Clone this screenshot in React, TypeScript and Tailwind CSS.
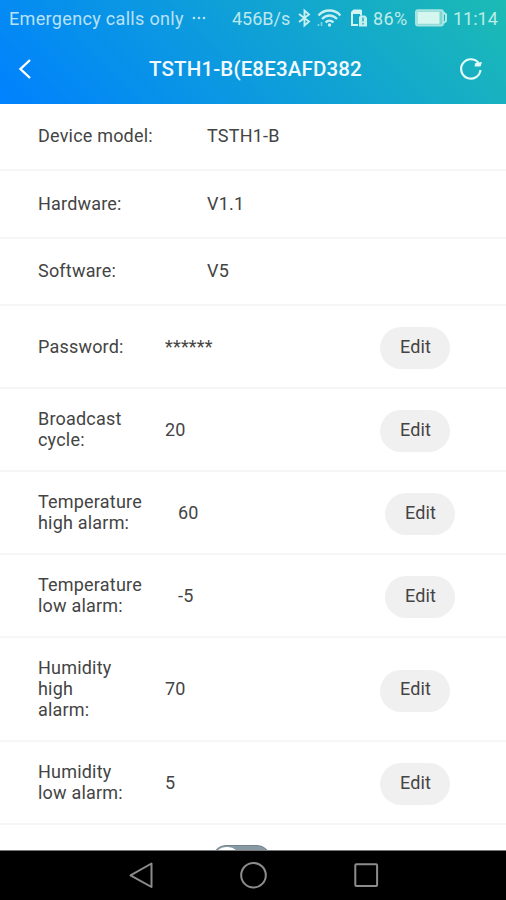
import type { ReactNode } from "react";

type InfoRowProps = {
  label: string;
  value: string;
  className: string;
};

type EditRowProps = {
  lines: string[];
  value: string;
  wide?: boolean;
  tall?: boolean;
};

const infoRows: InfoRowProps[] = [
  { label: "Device model:", value: "TSTH1-B", className: "h-[67px]" },
  { label: "Hardware:", value: "V1.1", className: "h-[68px]" },
  { label: "Software:", value: "V5", className: "h-[67px]" },
];

const editRows: EditRowProps[] = [
  { lines: ["Password:"], value: "******" },
  { lines: ["Broadcast", "cycle:"], value: "20" },
  { lines: ["Temperature", "high alarm:"], value: "60", wide: true },
  { lines: ["Temperature", "low alarm:"], value: "-5", wide: true },
  { lines: ["Humidity", "high", "alarm:"], value: "70", tall: true },
  { lines: ["Humidity", "low alarm:"], value: "5" },
];

function InfoRow({ label, value, className }: InfoRowProps) {
  return (
    <div className={`flex shrink-0 items-center border-b-2 border-[#f6f6f6] pb-0.5 pl-[38px] ${className}`}>
      <span className="w-[169px]">{label}</span>
      <span>{value}</span>
    </div>
  );
}

function EditRow({ lines, value, wide, tall }: EditRowProps) {
  return (
    <div
      className={`flex shrink-0 items-center border-b-2 border-[#f6f6f6] pl-[38px] ${tall ? "h-[104px]" : "h-[83px]"}`}
    >
      <div className={`${lines.length > 1 ? "pb-0.5" : ""} ${wide ? "w-[140px]" : "w-[127px]"}`}>
        {lines.map((line) => (
          <div key={line}>{line}</div>
        ))}
      </div>
      <span className={`${tall ? "pb-0.5" : ""} ${wide ? "w-[207px]" : "w-[215px]"}`}>{value}</span>
      <button
        className={`mt-[3px] h-[42px] w-[70px] rounded-full bg-[#f0f0f0] pl-px tracking-[0.1px] ${tall ? "pb-[5px]" : "pb-[3px]"}`}
      >
        Edit
      </button>
    </div>
  );
}

function StatusBar() {
  return (
    <div className="flex h-9 items-center pl-[9px] text-[18px] text-[#b9e2f8]">
      <span className="w-[183px] tracking-[0.33px]">Emergency calls only</span>
      <svg className="h-2 w-[14px]" viewBox="0 0 14 8" fill="currentColor">
        <circle cx="2" cy="4" r="1.3" />
        <circle cx="7" cy="4" r="1.3" />
        <circle cx="12" cy="4" r="1.3" />
      </svg>
      <span className="ml-[26px] w-[65px] text-[#b9e8ee]">456B/s</span>
      <svg className="h-5 w-3.5" viewBox="0 0 14 20" fill="none" stroke="#c6f0f2" strokeWidth="1.9">
        <path d="M2 6l10 7.500-4.500 4V2.500L12 6.500 2 14" />
      </svg>
      <svg className="ml-1.5 h-5 w-6" viewBox="0 0 24 20" fill="none" stroke="#c6f0f2" strokeWidth="2.300">
        <path d="M1.500 7.500C7 .8 18 .8 23.400 7.500M5 11c4.500-4.700 10.500-4.700 15 0M8.500 14.500c2.500-2.500 5.500-2.500 8 0" />
        <circle cx="12.500" cy="17" r="1.700" fill="#c6f0f2" stroke="none" />
        <path d="M4.500 14v4M1.500 16v2" strokeWidth="1.600" opacity=".6" />
      </svg>
      <svg className="ml-[9px] h-5 w-[18px]" viewBox="0 0 18 20" fill="none">
        <path d="M3.500 1.500H11l1 1v5h-2V6H3v10h5v2H1V4z" fill="#d2f4f2" />
        <path d="M10.500 7.500H15l2 2v9H9V9z" fill="#c6f0ee" />
        <path d="M13 9.500v4M13 15v1.500" stroke="#2aafc0" strokeWidth="1.500" />
      </svg>
      <span className="ml-[5px] w-[42px] tracking-[0.4px] text-[#bdece6]">86%</span>
      <svg className="h-[18px] w-[33px]" viewBox="0 0 33 18" fill="none">
        <rect x="1" y="1.200" width="27" height="15.300" rx="2" fill="#7ed6d2" stroke="#a5e4e0" strokeWidth="2" />
        <rect x="2.500" y="2.800" width="22" height="12" fill="#d6f6f0" />
        <path d="M28.500 3.500l2.500 2v6.500l-2.500 2" stroke="#b5eae4" strokeWidth="2" />
      </svg>
      <span className="ml-[5px] text-[#bdece6]">11:14</span>
    </div>
  );
}

function Header({ children }: { children: ReactNode }) {
  return (
    <header className="h-[104px] shrink-0 bg-[linear-gradient(45deg,#0081ff,#1cbbb4)]">
      <StatusBar />
      <div className="flex h-[66px] items-center text-white">
        <svg className="ml-[18px] h-5 w-[14px]" viewBox="0 0 14 20" fill="none" stroke="currentColor" strokeWidth="2.400">
          <path d="M12 1 2.500 10 12 19" />
        </svg>
        <h1 className="ml-[117px] w-[310px] text-[20.500px] font-medium tracking-[0.150px] text-[#f2faff]">
          {children}
        </h1>
        <svg className="h-6 w-6" viewBox="0 0 24 24" fill="none" stroke="#e4faf8" strokeWidth="2.200">
          <path d="M21.500 13A9.700 9.700 0 1 1 19.500 6" />
          <path d="m15.500 9.500.8-3.500L23 5l-1.500 4.500z" fill="#e4faf8" stroke="none" />
        </svg>
      </div>
    </header>
  );
}

function NavBar() {
  return (
    <nav className="flex h-[50px] shrink-0 items-center border-t border-[#777] bg-black pb-0.5 pl-[129px]">
      <svg className="h-7 w-[252px]" viewBox="0 0 252 28" fill="none" stroke="#8c8c8c" strokeWidth="2">
        <path d="M22.500 2.500v23.500L1.500 14.300z" strokeLinejoin="round" />
        <circle cx="124.500" cy="14.200" r="12.300" />
        <rect x="226.300" y="3.200" width="21.800" height="21.800" rx="1" />
      </svg>
    </nav>
  );
}

export default function App() {
  return (
    <div className="flex h-[900px] w-[506px] flex-col overflow-hidden bg-white font-[Roboto,sans-serif] text-[18px] leading-[21px] text-[#444]">
      <Header>TSTH1-B(E8E3AFD382</Header>
      <main className="flex min-h-0 flex-1 flex-col overflow-hidden tracking-[0.2px]">
        {infoRows.map((row) => (
          <InfoRow key={row.label} {...row} />
        ))}
        {editRows.map((row) => (
          <EditRow key={row.lines.join(" ")} {...row} />
        ))}
        <div className="mt-5 ml-[212px] h-[34px] w-[59px] shrink-0 rounded-[14px] border border-[#75868e] bg-[#8799a3] p-px">
          <div className="h-[30px] w-[26px] rounded-[12px] bg-white" />
        </div>
      </main>
      <NavBar />
    </div>
  );
}
